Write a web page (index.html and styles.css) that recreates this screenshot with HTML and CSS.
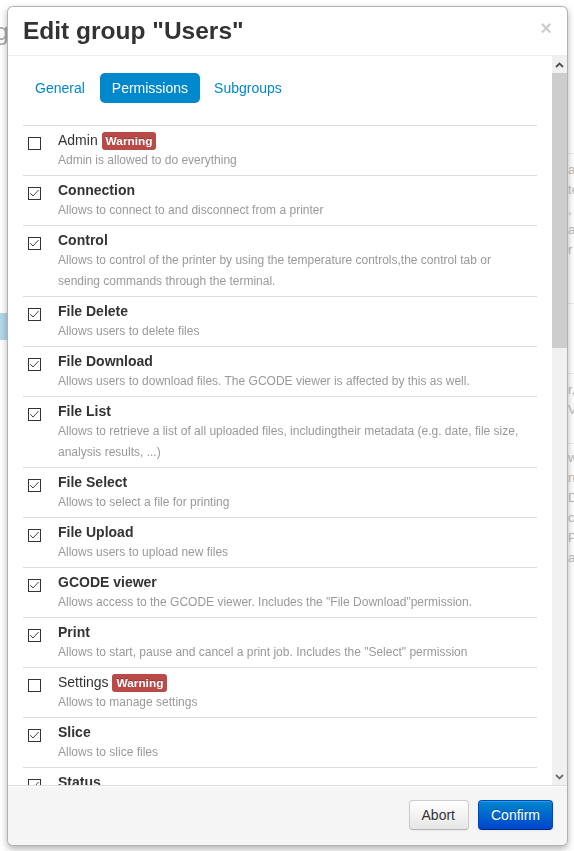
FILE: index.html
```html
<!DOCTYPE html>
<html lang="en">
<head>
<meta charset="utf-8">
<title>Edit group</title>
<link rel="stylesheet" href="styles.css">
</head>
<body>
<svg class="defs" width="0" height="0" aria-hidden="true">
  <symbol id="cb-on" viewBox="0 0 13 13">
    <rect x="0.5" y="0.5" width="12" height="12" fill="#fff" stroke="#333"/>
    <path d="M2.3 6.2 L5 9 L10.6 3" fill="none" stroke="#444" stroke-width="1"/>
  </symbol>
  <symbol id="cb-off" viewBox="0 0 13 13">
    <rect x="0.5" y="0.5" width="12" height="12" fill="#fff" stroke="#333"/>
  </symbol>
</svg>

<div class="page">
  <div class="page-main">
    <h1 class="bg-title">Settings</h1>
    <div class="bg-blue"></div>
  </div>
  <div class="page-side">
    <div class="side-sec s1">
      <p>a</p><p>te</p><p>,</p><p>a</p><p>r</p>
    </div>
    <div class="side-sec s2"></div>
    <div class="side-sec s3">
      <p>r,</p><p>Ve</p>
    </div>
    <div class="side-sec s4">
      <p>w</p><p>nt</p><p>De</p><p>cr</p><p>P</p><p>a</p>
    </div>
  </div>
</div>

<div class="modal">
  <div class="modal-header">
    <button class="close" type="button">×</button>
    <h3>Edit group "Users"</h3>
  </div>
  <div class="modal-body">
    <div class="body-content">
      <ul class="nav-pills">
        <li><a>General</a></li>
        <li class="active"><a>Permissions</a></li>
        <li><a>Subgroups</a></li>
      </ul>
      <table class="perm-table">
        <tbody>
          <tr><td class="cb-cell"><svg class="cb"><use href="#cb-off"/></svg></td><td class="perm"><div class="perm-name">Admin <span class="label">Warning</span></div><div class="perm-desc">Admin is allowed to do everything</div></td></tr>
          <tr><td class="cb-cell"><svg class="cb"><use href="#cb-on"/></svg></td><td class="perm"><div class="perm-name on">Connection</div><div class="perm-desc">Allows to connect to and disconnect from a printer</div></td></tr>
          <tr><td class="cb-cell"><svg class="cb"><use href="#cb-on"/></svg></td><td class="perm"><div class="perm-name on">Control</div><div class="perm-desc">Allows to control of the printer by using the temperature controls,the control tab or sending commands through the terminal.</div></td></tr>
          <tr><td class="cb-cell"><svg class="cb"><use href="#cb-on"/></svg></td><td class="perm"><div class="perm-name on">File Delete</div><div class="perm-desc">Allows users to delete files</div></td></tr>
          <tr><td class="cb-cell"><svg class="cb"><use href="#cb-on"/></svg></td><td class="perm"><div class="perm-name on">File Download</div><div class="perm-desc">Allows users to download files. The GCODE viewer is affected by this as well.</div></td></tr>
          <tr><td class="cb-cell"><svg class="cb"><use href="#cb-on"/></svg></td><td class="perm"><div class="perm-name on">File List</div><div class="perm-desc">Allows to retrieve a list of all uploaded files, includingtheir metadata (e.g. date, file size, analysis results, ...)</div></td></tr>
          <tr><td class="cb-cell"><svg class="cb"><use href="#cb-on"/></svg></td><td class="perm"><div class="perm-name on">File Select</div><div class="perm-desc">Allows to select a file for printing</div></td></tr>
          <tr><td class="cb-cell"><svg class="cb"><use href="#cb-on"/></svg></td><td class="perm"><div class="perm-name on">File Upload</div><div class="perm-desc">Allows users to upload new files</div></td></tr>
          <tr><td class="cb-cell"><svg class="cb"><use href="#cb-on"/></svg></td><td class="perm"><div class="perm-name on">GCODE viewer</div><div class="perm-desc">Allows access to the GCODE viewer. Includes the "File Download"permission.</div></td></tr>
          <tr><td class="cb-cell"><svg class="cb"><use href="#cb-on"/></svg></td><td class="perm"><div class="perm-name on">Print</div><div class="perm-desc">Allows to start, pause and cancel a print job. Includes the "Select" permission</div></td></tr>
          <tr><td class="cb-cell"><svg class="cb"><use href="#cb-off"/></svg></td><td class="perm"><div class="perm-name">Settings <span class="label">Warning</span></div><div class="perm-desc">Allows to manage settings</div></td></tr>
          <tr><td class="cb-cell"><svg class="cb"><use href="#cb-on"/></svg></td><td class="perm"><div class="perm-name on">Slice</div><div class="perm-desc">Allows to slice files</div></td></tr>
          <tr><td class="cb-cell"><svg class="cb"><use href="#cb-on"/></svg></td><td class="perm"><div class="perm-name on">Status</div><div class="perm-desc">Allows to gather status information, e.g. job progress, printer state, temperatures, ... Mandatory for the default UI to work</div></td></tr>
          <tr><td class="cb-cell"><svg class="cb"><use href="#cb-off"/></svg></td><td class="perm"><div class="perm-name">Timelapse Admin</div><div class="perm-desc">Allows to change the timelapse settings, delete unrendered timelapses and render unrendered timelapses</div></td></tr>
          <tr><td class="cb-cell"><svg class="cb"><use href="#cb-on"/></svg></td><td class="perm"><div class="perm-name on">Timelapse Delete</div><div class="perm-desc">Allows to delete timelapses</div></td></tr>
          <tr><td class="cb-cell"><svg class="cb"><use href="#cb-on"/></svg></td><td class="perm"><div class="perm-name on">Timelapse Download</div><div class="perm-desc">Allows to download timelapses</div></td></tr>
          <tr><td class="cb-cell"><svg class="cb"><use href="#cb-on"/></svg></td><td class="perm"><div class="perm-name on">Timelapse List</div><div class="perm-desc">Allows to list timelapse files</div></td></tr>
          <tr><td class="cb-cell"><svg class="cb"><use href="#cb-on"/></svg></td><td class="perm"><div class="perm-name on">Webcam</div><div class="perm-desc">Allows to watch the webcam stream</div></td></tr>
        </tbody>
      </table>
    </div>
    <div class="scrollbar" aria-hidden="true">
      <div class="sb-btn">
        <svg width="9" height="6" viewBox="0 0 9 6"><path d="M1 5 L4.5 1.5 L8 5" fill="none" stroke="#505050" stroke-width="1.8"/></svg>
      </div>
      <div class="sb-track"><div class="sb-thumb"></div></div>
      <div class="sb-btn">
        <svg width="9" height="6" viewBox="0 0 9 6"><path d="M1 1 L4.5 4.5 L8 1" fill="none" stroke="#707070" stroke-width="1.8"/></svg>
      </div>
    </div>
  </div>
  <div class="modal-footer">
    <button class="btn" type="button">Abort</button>
    <button class="btn btn-primary" type="button">Confirm</button>
  </div>
</div>
</body>
</html>
```

FILE: styles.css
```css
* { box-sizing: border-box; }

html, body {
  margin: 0;
  padding: 0;
  height: 100%;
  overflow: hidden;
}

body {
  background: #fff;
  font-family: "Liberation Sans", Arial, Helvetica, sans-serif;
  font-size: 14px;
  line-height: 20px;
  color: #333;
}

.defs { position: absolute; width: 0; height: 0; overflow: hidden; }

/* ---------- background page (mostly hidden by the dialog) ---------- */
.page {
  display: grid;
  grid-template-columns: 568px 1fr;
  height: 100%;
}

.page-main { overflow: hidden; }

.bg-title {
  margin: 14px 0 0 -66px;
  font-size: 24px;
  font-weight: normal;
  line-height: 36px;
  color: #a9a9a9;
  white-space: nowrap;
}

.bg-blue {
  margin-top: 263px;
  width: 100px;
  height: 27px;
  background: #b3d7ea;
}

.page-side {
  overflow: hidden;
  font-size: 13px;
  line-height: 20px;
  color: #bdbdbd;
  white-space: nowrap;
}

.page-side p { margin: 0; }

.side-sec { border-top: 1px solid #ececec; }
.s1 { margin-top: 153px; padding-top: 6px; height: 150px; }
.s2 { height: 70px; }
.s3 { padding-top: 6px; height: 70px; }
.s4 { padding-top: 4px; }

/* ---------- dialog ---------- */
.modal {
  position: fixed;
  top: 6px;
  left: 7px;
  width: 561px;
  height: 840px;
  display: flex;
  flex-direction: column;
  background: #fff;
  border: 1px solid rgba(0, 0, 0, 0.3);
  border-radius: 6px;
  box-shadow: 0 3px 7px rgba(0, 0, 0, 0.3);
  overflow: hidden;
}

.modal-header {
  flex: none;
  padding: 9px 15px;
  border-bottom: 1px solid #eee;
}

.modal-header h3 {
  margin: 0;
  font-size: 24.5px;
  font-weight: bold;
  line-height: 30px;
  color: #333;
}

.close {
  float: right;
  margin-top: 2px;
  padding: 0;
  border: 0;
  background: transparent;
  font-family: "Liberation Sans", Arial, sans-serif;
  font-size: 20px;
  font-weight: bold;
  line-height: 20px;
  color: #000;
  opacity: 0.2;
}

.modal-body {
  flex: 1;
  min-height: 0;
  display: flex;
}

.body-content {
  flex: 1;
  min-width: 0;
  overflow: hidden;
  padding: 15px 15px 0 15px;
}

/* fake scrollbar */
.scrollbar {
  flex: none;
  width: 15px;
  display: flex;
  flex-direction: column;
  background: #f0f0f0;
}

.sb-btn {
  flex: none;
  height: 17px;
  display: flex;
  align-items: center;
  justify-content: center;
}

.sb-btn svg { display: block; }

.sb-track {
  flex: 1;
}

.sb-thumb {
  height: 275px;
  background: #cdcdcd;
}

/* tabs */
.nav-pills {
  display: flex;
  list-style: none;
  margin: 0 0 20px;
  padding: 0;
}

.nav-pills a {
  display: block;
  margin: 2px 2px 2px 0;
  padding: 8px 12px;
  line-height: 14px;
  border-radius: 5px;
  color: #0088cc;
  cursor: pointer;
}

.nav-pills li:first-child a { padding-right: 13px; }

.nav-pills .active a {
  background: #0088cc;
  color: #fff;
}

/* permissions table */
.perm-table {
  width: 100%;
  border-collapse: collapse;
  border-spacing: 0;
}

.perm-table td {
  border-top: 1px solid #ddd;
  vertical-align: top;
}

.cb-cell {
  width: 35px;
  padding: 11px 0 0 5px;
}

.cb {
  display: block;
  width: 13px;
  height: 13px;
}

.perm { padding: 4px 4px 4px 0; }

.perm-name {
  font-size: 14px;
  line-height: 20px;
  color: #333;
}

.perm-name.on { font-weight: bold; }

.perm-desc {
  font-size: 12px;
  line-height: 21px;
  color: #999;
}

.label {
  display: inline-block;
  padding: 2px 4px;
  font-size: 11.844px;
  font-weight: bold;
  line-height: 14px;
  color: #fff;
  vertical-align: baseline;
  white-space: nowrap;
  text-shadow: 0 -1px 0 rgba(0, 0, 0, 0.25);
  background: #b94a48;
  border-radius: 3px;
}

/* footer */
.modal-footer {
  flex: none;
  display: flex;
  justify-content: flex-end;
  gap: 9px;
  padding: 14px 14px 15px;
  background: #f5f5f5;
  border-top: 1px solid #ddd;
  box-shadow: inset 0 1px 0 #fff;
}

.btn {
  display: inline-block;
  padding: 4px 12px;
  font-family: "Liberation Sans", Arial, Helvetica, sans-serif;
  font-size: 14px;
  line-height: 20px;
  color: #333;
  text-shadow: 0 1px 1px rgba(255, 255, 255, 0.75);
  background: linear-gradient(to bottom, #ffffff, #e6e6e6);
  border: 1px solid #ccc;
  border-bottom-color: #b3b3b3;
  border-radius: 4px;
  box-shadow: inset 0 1px 0 rgba(255, 255, 255, 0.2), 0 1px 2px rgba(0, 0, 0, 0.05);
}

.btn:first-child { padding-right: 13px; }

.btn-primary {
  color: #fff;
  text-shadow: 0 -1px 0 rgba(0, 0, 0, 0.25);
  background: linear-gradient(to bottom, #0088cc, #0044cc);
  border-color: #0044cc #0044cc #002a80;
}
```
